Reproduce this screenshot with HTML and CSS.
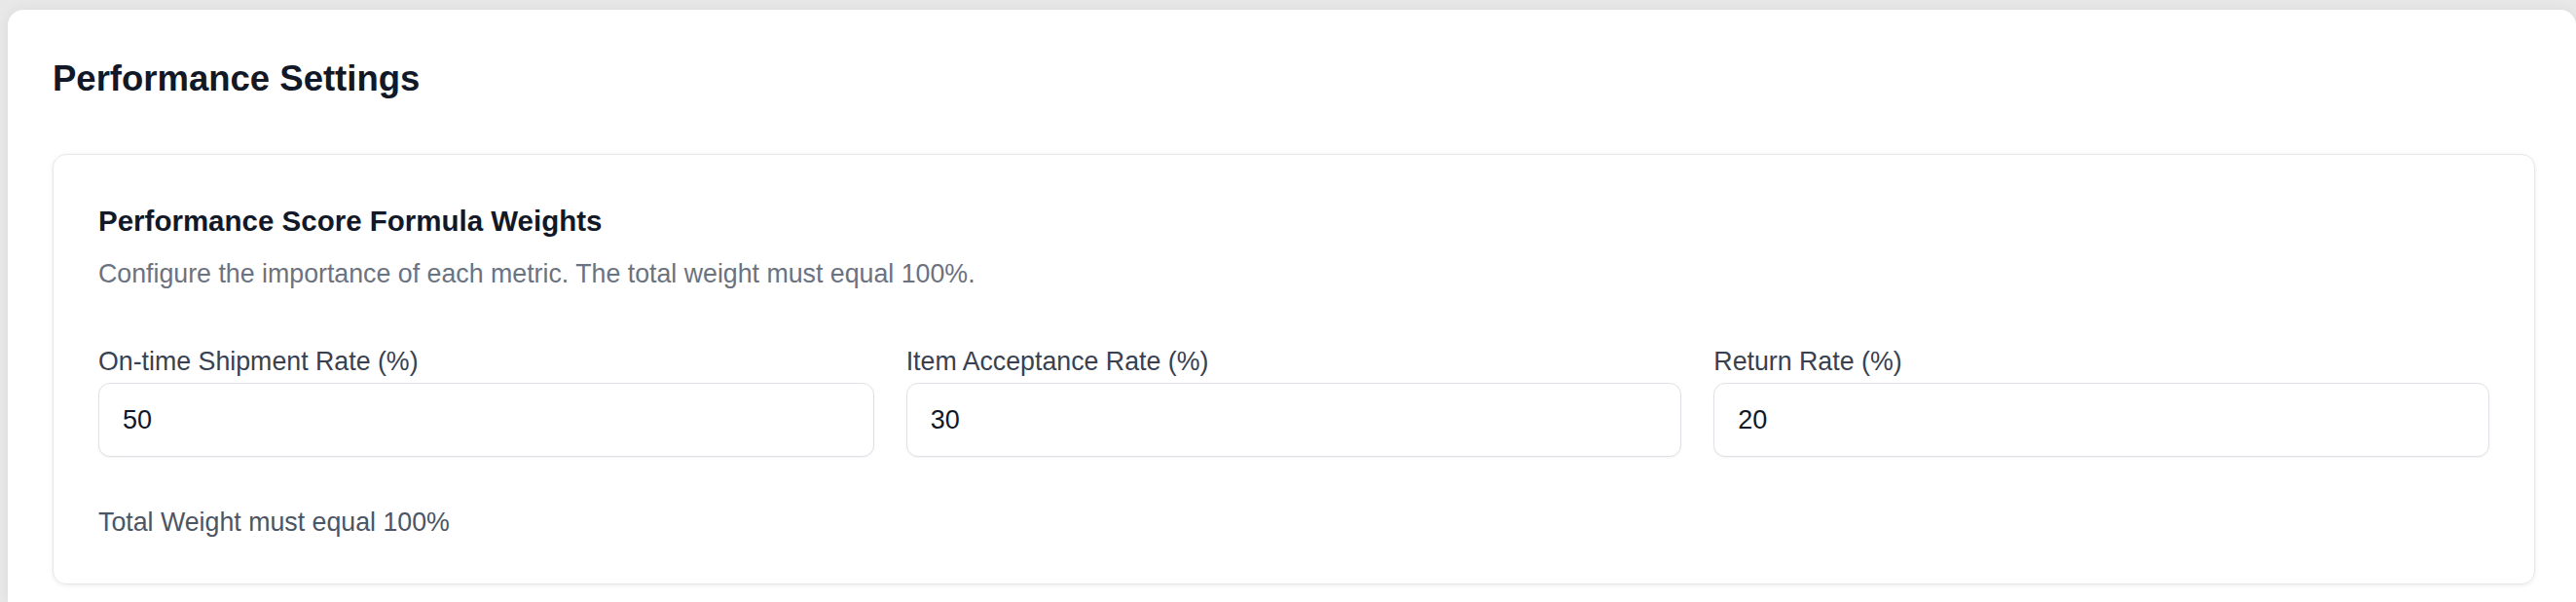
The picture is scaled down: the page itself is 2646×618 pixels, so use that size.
FILE: index.html
```html
<!DOCTYPE html>
<html lang="en">
<head>
    <meta charset="UTF-8">
    <meta name="viewport" content="width=device-width, initial-scale=1.0">
    <title>Performance Settings</title>
    <link rel="stylesheet" href="styles.css">
</head>
<body>

<div class="settings-panel">
    <h1 class="page-title">Performance Settings</h1>

    <div class="card">
        <h2 class="card-title">Performance Score Formula Weights</h2>
        <p class="card-desc">Configure the importance of each metric. The total weight must equal 100%.</p>

        <div class="weights-grid">
            <div class="field">
                <label for="onTime">On-time Shipment Rate (%)</label>
                <input type="number" id="onTime" value="50">
            </div>
            <div class="field">
                <label for="acceptance">Item Acceptance Rate (%)</label>
                <input type="number" id="acceptance" value="30">
            </div>
            <div class="field">
                <label for="returnRate">Return Rate (%)</label>
                <input type="number" id="returnRate" value="20">
            </div>
        </div>

        <p class="total-note">Total Weight must equal 100%</p>
    </div>
</div>

</body>
</html>
```

FILE: styles.css
```css
html, body {
    height: 100%;
}
body {
    font-family: "Liberation Sans", Arial, sans-serif;
    margin: 0;
    padding: 10px 0 0 8px;
    box-sizing: border-box;
    background-color: #e8e8e8;
    overflow: hidden;
}
.settings-panel {
    background: #fff;
    border-radius: 16px 16px 0 0;
    padding: 49px 42px 0 46px;
    box-sizing: border-box;
    height: 100%;
    box-shadow: 0 0 14px rgba(0, 0, 0, 0.06);
}
.page-title {
    margin: 0 0 55px;
    font-size: 36.5px;
    line-height: 1.2;
    font-weight: 700;
    color: #111827;
}
.card {
    border: 1px solid #e5e7eb;
    border-radius: 14px;
    padding: 47px 46px 43px;
    box-shadow: 0 1px 4px rgba(0, 0, 0, 0.08);
}
.card-title {
    margin: 0;
    font-size: 29.5px;
    line-height: 1.4;
    font-weight: 700;
    color: #111827;
}
.card-desc {
    margin: 14px 0 0;
    font-size: 26.75px;
    line-height: 1.5;
    color: #6b7280;
}
.weights-grid {
    display: grid;
    grid-template-columns: repeat(3, 1fr);
    gap: 33px;
    margin-top: 50px;
}
.field label {
    display: block;
    font-size: 26.75px;
    line-height: 1.5;
    color: #374151;
    margin-bottom: 2px;
}
.field input {
    display: block;
    width: 100%;
    box-sizing: border-box;
    height: 76px;
    padding: 0 24px;
    border: 1.5px solid #dfe1e6;
    border-radius: 12px;
    font-family: inherit;
    font-size: 27px;
    color: #111827;
    background: #fff;
    box-shadow: 0 1px 2px rgba(0, 0, 0, 0.05);
    -moz-appearance: textfield;
}
.field input::-webkit-outer-spin-button,
.field input::-webkit-inner-spin-button {
    -webkit-appearance: none;
    margin: 0;
}
.total-note {
    margin: 47px 0 0;
    font-size: 26.75px;
    line-height: 1.5;
    color: #4b5563;
}
```
